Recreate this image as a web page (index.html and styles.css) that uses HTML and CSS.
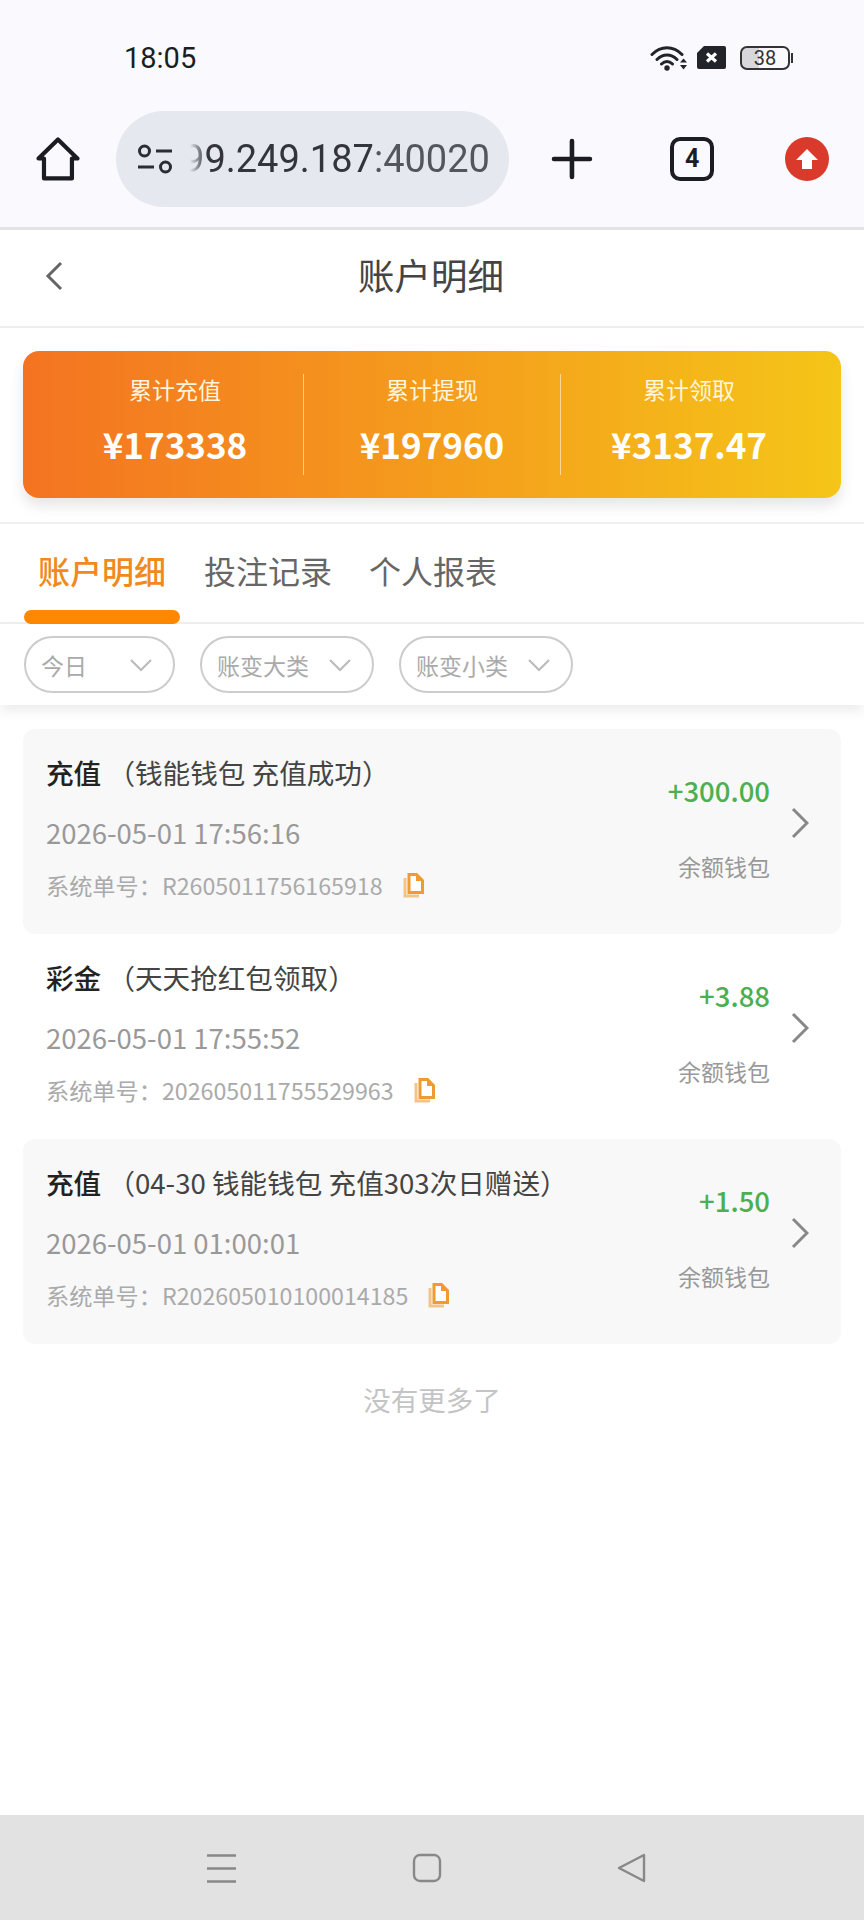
FILE: index.html
```html
<!DOCTYPE html>
<html lang="zh-CN">
<head>
    <meta charset="UTF-8">
    <meta name="viewport" content="width=device-width, initial-scale=1.0">
    <title>账户明细</title>
    <link rel="stylesheet" href="styles.css">
</head>
<body>
    <div class="phone">
        <!-- status bar and browser toolbar -->
        <div class="browser-top">
            <div class="status-bar">
                <span class="status-time">18:05</span>
                <div class="status-icons">
                    <svg class="icon-wifi" width="37" height="27" viewBox="0 0 37 27">
                        <path d="M2 10.5C11 1.5 23 1.5 32 10.5M7 15.5C13 9.5 21 9.5 27 15.5M11.5 20C15 16.5 19 16.5 22.5 20" fill="none" stroke="#222429" stroke-width="3" stroke-linecap="round"/>
                        <circle cx="17" cy="24" r="2.7" fill="#222429"/>
                        <path d="M30 18.5h7l-3.500-4zM30 21h7l-3.500 4.500z" fill="#222429"/>
                    </svg>
                    <svg class="icon-sim" width="29" height="23" viewBox="0 0 29 23">
                        <path d="M7 0H27a2 2 0 0 1 2 2V21a2 2 0 0 1-2 2H2a2 2 0 0 1-2-2V7z" fill="#222429"/>
                        <path d="M10 7.500L19 15.500M19 7.500L10 15.500" stroke="#fff" stroke-width="3.200"/>
                    </svg>
                    <div class="battery">
                        <div class="battery-body">38</div>
                        <div class="battery-nub"></div>
                    </div>
                </div>
            </div>
            <div class="toolbar">
                <svg class="icon-home" width="44" height="44" viewBox="0 0 44 44">
                    <path d="M2.500 21.500L22 2.500L41.500 21.500H36V41.500H8V21.500Z" fill="none" stroke="#1c1d22" stroke-width="4.200" stroke-linejoin="round"/>
                </svg>
                <div class="address-pill">
                    <svg class="icon-site" width="36" height="30" viewBox="0 0 36 30">
                        <circle cx="7.500" cy="7" r="5" fill="none" stroke="#2b2d33" stroke-width="3"/>
                        <path d="M19 7H35M1 23H17" stroke="#2b2d33" stroke-width="3.200"/>
                        <circle cx="28.500" cy="23" r="5" fill="none" stroke="#2b2d33" stroke-width="3"/>
                    </svg>
                    <div class="address-clip">
                        <span class="address-text">99.249.187<span class="address-port">:40020</span></span>
                    </div>
                </div>
                <svg class="icon-plus" width="44" height="44" viewBox="0 0 44 44">
                    <path d="M4 22H40M22 4V40" stroke="#1c1d22" stroke-width="4.600" stroke-linecap="round"/>
                </svg>
                <div class="tab-count">4</div>
                <div class="update-badge">
                    <svg width="24" height="24" viewBox="0 0 24 24">
                        <path d="M12 2L23 13H17V22H7V13H1Z" fill="#fff"/>
                    </svg>
                </div>
            </div>
        </div>

        <div class="nav-header">
            <svg class="nav-back" width="18" height="30" viewBox="0 0 18 30">
                <path d="M16 2L3 15L16 28" fill="none" stroke="#666" stroke-width="3"/>
            </svg>
            <h1 class="nav-title">账户明细</h1>
        </div>

        <div class="summary-wrap">
            <div class="summary-card">
                <div class="summary-col">
                    <span class="summary-label">累计充值</span>
                    <span class="summary-value">¥173338</span>
                </div>
                <div class="summary-col">
                    <span class="summary-label">累计提现</span>
                    <span class="summary-value">¥197960</span>
                </div>
                <div class="summary-col">
                    <span class="summary-label">累计领取</span>
                    <span class="summary-value">¥3137.47</span>
                </div>
            </div>
        </div>

        <div class="tabs">
            <div class="tab tab-active">账户明细</div>
            <div class="tab">投注记录</div>
            <div class="tab">个人报表</div>
        </div>

        <div class="filters">
            <div class="filter filter-short">
                <span>今日</span>
                <svg width="24" height="14" viewBox="0 0 24 14"><path d="M2 2L12 12L22 2" fill="none" stroke="#bbb" stroke-width="2.200"/></svg>
            </div>
            <div class="filter">
                <span>账变大类</span>
                <svg width="24" height="14" viewBox="0 0 24 14"><path d="M2 2L12 12L22 2" fill="none" stroke="#bbb" stroke-width="2.200"/></svg>
            </div>
            <div class="filter">
                <span>账变小类</span>
                <svg width="24" height="14" viewBox="0 0 24 14"><path d="M2 2L12 12L22 2" fill="none" stroke="#bbb" stroke-width="2.200"/></svg>
            </div>
        </div>

        <div class="records">
            <div class="record record-grey">
                <div class="record-main">
                    <div class="record-title"><b>充值</b> （钱能钱包 充值成功）</div>
                    <div class="record-time">2026-05-01 17:56:16</div>
                    <div class="record-order">
                        <span>系统单号：R2605011756165918</span>
                        <svg class="copy-icon" width="21" height="25" viewBox="0 0 21 25">
                            <path d="M2 5V23H16" fill="none" stroke="#f3c48a" stroke-width="3"/>
                            <path d="M6 1.500H13.500L19.500 7.500V19.500H6Z" fill="#fff" stroke="#ef9a32" stroke-width="3"/>
                            <path d="M13 1.500L19.500 8H13Z" fill="#ef9a32"/>
                        </svg>
                    </div>
                </div>
                <div class="record-side">
                    <div class="record-amount">+300.00</div>
                    <div class="record-wallet">余额钱包</div>
                </div>
                <svg class="record-arrow" width="18" height="32" viewBox="0 0 18 32">
                    <path d="M2 2L16 16L2 30" fill="none" stroke="#888" stroke-width="3"/>
                </svg>
            </div>

            <div class="record">
                <div class="record-main">
                    <div class="record-title"><b>彩金</b> （天天抢红包领取）</div>
                    <div class="record-time">2026-05-01 17:55:52</div>
                    <div class="record-order">
                        <span>系统单号：202605011755529963</span>
                        <svg class="copy-icon" width="21" height="25" viewBox="0 0 21 25">
                            <path d="M2 5V23H16" fill="none" stroke="#f3c48a" stroke-width="3"/>
                            <path d="M6 1.500H13.500L19.500 7.500V19.500H6Z" fill="#fff" stroke="#ef9a32" stroke-width="3"/>
                            <path d="M13 1.500L19.500 8H13Z" fill="#ef9a32"/>
                        </svg>
                    </div>
                </div>
                <div class="record-side">
                    <div class="record-amount">+3.88</div>
                    <div class="record-wallet">余额钱包</div>
                </div>
                <svg class="record-arrow" width="18" height="32" viewBox="0 0 18 32">
                    <path d="M2 2L16 16L2 30" fill="none" stroke="#888" stroke-width="3"/>
                </svg>
            </div>

            <div class="record record-grey">
                <div class="record-main">
                    <div class="record-title"><b>充值</b> （04-30 钱能钱包 充值303次日赠送）</div>
                    <div class="record-time">2026-05-01 01:00:01</div>
                    <div class="record-order">
                        <span>系统单号：R202605010100014185</span>
                        <svg class="copy-icon" width="21" height="25" viewBox="0 0 21 25">
                            <path d="M2 5V23H16" fill="none" stroke="#f3c48a" stroke-width="3"/>
                            <path d="M6 1.500H13.500L19.500 7.500V19.500H6Z" fill="#fff" stroke="#ef9a32" stroke-width="3"/>
                            <path d="M13 1.500L19.500 8H13Z" fill="#ef9a32"/>
                        </svg>
                    </div>
                </div>
                <div class="record-side">
                    <div class="record-amount">+1.50</div>
                    <div class="record-wallet">余额钱包</div>
                </div>
                <svg class="record-arrow" width="18" height="32" viewBox="0 0 18 32">
                    <path d="M2 2L16 16L2 30" fill="none" stroke="#888" stroke-width="3"/>
                </svg>
            </div>
        </div>

        <div class="no-more">没有更多了</div>

        <div class="system-nav">
            <svg width="30" height="30" viewBox="0 0 30 30">
                <path d="M1 2.500H30M1 15.500H30M1 28.500H30" stroke="#888" stroke-width="2.400"/>
            </svg>
            <svg width="30" height="30" viewBox="0 0 30 30">
                <rect x="2" y="2" width="26" height="26" rx="6" fill="none" stroke="#888" stroke-width="2.400"/>
            </svg>
            <svg width="30" height="30" viewBox="0 0 30 30">
                <path d="M2 15L27 2V28Z" fill="none" stroke="#888" stroke-width="2.400" stroke-linejoin="round"/>
            </svg>
        </div>
    </div>
</body>
</html>
```

FILE: styles.css
```css
* {
    box-sizing: border-box;
}
body {
    margin: 0;
    background-color: #fff;
    font-family: "Noto Sans CJK SC", "Noto Sans", sans-serif;
}
.phone {
    width: 864px;
    height: 1920px;
    display: flex;
    flex-direction: column;
    overflow: hidden;
}

/* status bar + browser toolbar */
.browser-top {
    height: 230px;
    background-color: #f9f9fe;
    border-bottom: 3px solid #e3e3e6;
}
.status-bar {
    height: 111px;
    padding: 42px 71px 0 124px;
    display: flex;
    justify-content: space-between;
    align-items: flex-start;
}
.status-time {
    font-family: Roboto, sans-serif;
    font-size: 29px;
    line-height: 32px;
    color: #1c1d22;
}
.status-icons {
    display: flex;
    align-items: center;
    gap: 10px;
    margin-top: 2px;
}
.battery {
    display: flex;
    align-items: center;
    margin-left: 4px;
}
.battery-body {
    width: 50px;
    height: 24px;
    border: 2px solid #333;
    border-radius: 7px;
    background: linear-gradient(90deg, #d8d8dc 38%, #f9f9fe 38%);
    font-family: Roboto, sans-serif;
    font-size: 20px;
    line-height: 20px;
    text-align: center;
    color: #333;
}
.battery-nub {
    width: 2px;
    height: 10px;
    margin-left: 1px;
    background-color: #333;
}
.toolbar {
    height: 96px;
    padding: 0 35px 0 36px;
    display: flex;
    align-items: center;
}
.address-pill {
    width: 394px;
    height: 96px;
    margin-left: 36px;
    padding: 0 15px 0 21px;
    border-radius: 48px;
    background-color: #e6e8f0;
    display: flex;
    align-items: center;
}
.address-clip {
    width: 300px;
    margin-left: 17px;
    flex-shrink: 0;
    overflow: hidden;
    display: flex;
    justify-content: flex-end;
    -webkit-mask-image: linear-gradient(90deg, transparent, #000 16px);
    mask-image: linear-gradient(90deg, transparent, #000 16px);
}
.address-text {
    font-family: Roboto, sans-serif;
    font-size: 38px;
    line-height: 48px;
    color: #33353b;
    white-space: nowrap;
}
.address-port {
    color: #54565d;
}
.icon-plus {
    margin-left: 41px;
}
.tab-count {
    width: 44px;
    height: 44px;
    margin-left: 76px;
    border: 4px solid #1c1d22;
    border-radius: 10px;
    font-family: Roboto, sans-serif;
    font-size: 25px;
    font-weight: 700;
    line-height: 36px;
    text-align: center;
    color: #1c1d22;
}
.update-badge {
    width: 44px;
    height: 44px;
    margin-left: 71px;
    border-radius: 50%;
    background-color: #d93a2b;
    display: flex;
    align-items: center;
    justify-content: center;
}

/* page header */
.nav-header {
    height: 98px;
    padding-left: 45px;
    border-bottom: 2px solid #eee;
    display: flex;
    align-items: center;
}
.nav-back {
    margin-bottom: 5px;
}
.nav-title {
    width: 146px;
    margin: 0 0 7px 295px;
    font-size: 36.500px;
    font-weight: 400;
    line-height: 48px;
    color: #444;
    white-space: nowrap;
}

/* totals card */
.summary-wrap {
    height: 196px;
    padding: 23px 23px 0;
    border-bottom: 2px solid #f0f0f0;
}
.summary-card {
    height: 147px;
    padding: 23px 24px;
    border-radius: 16px;
    background: linear-gradient(90deg, #f47321, #f5c518);
    box-shadow: 0 8px 14px rgba(0, 0, 0, 0.1);
    display: flex;
}
.summary-col {
    flex: 1;
    display: flex;
    flex-direction: column;
    align-items: center;
    border-right: 1px solid rgba(255, 255, 255, 0.55);
    color: #fff;
}
.summary-col:last-child {
    border-right: none;
}
.summary-label {
    margin-top: -5px;
    font-size: 23px;
    line-height: 40px;
    color: #fff5dc;
}
.summary-value {
    margin-top: 13px;
    font-size: 35px;
    font-weight: 700;
    line-height: 44px;
}

/* tabs */
.tabs {
    height: 100px;
    padding-left: 24px;
    border-bottom: 2px solid #f0f0f0;
    display: flex;
    gap: 37px;
}
.tab {
    width: 128px;
    height: 100px;
    padding-top: 22px;
    font-size: 32px;
    line-height: 48px;
    text-align: center;
    color: #666;
    white-space: nowrap;
}
.tab-active {
    width: 156px;
    margin-right: -13px;
    font-weight: 500;
    color: #f08a1c;
}
.tab-active::after {
    content: "";
    display: block;
    height: 14px;
    margin-top: 16px;
    border-radius: 8px;
    background-color: #ff8800;
}

/* filters */
.filters {
    height: 81px;
    padding: 12px 24px 0;
    display: flex;
    gap: 25px;
    background-color: #fff;
    box-shadow: 0 6px 12px rgba(0, 0, 0, 0.08);
    position: relative;
}
.filter {
    width: 174px;
    height: 57px;
    padding: 0 20px 0 15px;
    border: 2px solid #ccc;
    border-radius: 29px;
    display: flex;
    align-items: center;
    justify-content: space-between;
    font-size: 23px;
    color: #aaa;
}
.filter-short {
    width: 151px;
}

/* record list */
.records {
    padding: 24px 23px 0;
    display: flex;
    flex-direction: column;
}
.record {
    height: 205px;
    padding: 0 22px 0 23px;
    border-radius: 12px;
    display: flex;
    align-items: center;
}
.record-grey {
    background-color: #f8f8f8;
}
.record-main {
    flex: 1;
    padding-bottom: 7px;
}
.record-title {
    font-size: 27.600px;
    line-height: 38px;
    color: #444;
    white-space: nowrap;
}
.record-title b {
    font-weight: 500;
    color: #222;
}
.record-time {
    margin-top: 21px;
    font-size: 27.500px;
    line-height: 40px;
    color: #999;
}
.record-order {
    margin-top: 15px;
    display: flex;
    align-items: center;
    gap: 20px;
    font-size: 23.200px;
    line-height: 36px;
    color: #aaa;
}
.record-side {
    display: flex;
    flex-direction: column;
    align-items: flex-end;
    padding-bottom: 7px;
}
.record-amount {
    font-size: 27.500px;
    font-weight: 500;
    line-height: 38px;
    color: #4caf50;
}
.record-wallet {
    margin-top: 38px;
    font-size: 23px;
    line-height: 38px;
    color: #999;
}
.record-arrow {
    margin: 0 10px 17px 21px;
    flex-shrink: 0;
}
.no-more {
    margin-top: 35px;
    font-size: 27.500px;
    line-height: 40px;
    text-align: center;
    color: #c4c4c4;
}

/* android nav bar */
.system-nav {
    margin-top: auto;
    height: 105px;
    padding: 38px 217px 0 206px;
    background-color: #e2e2e2;
    display: flex;
    justify-content: space-between;
    align-items: flex-start;
}
```
